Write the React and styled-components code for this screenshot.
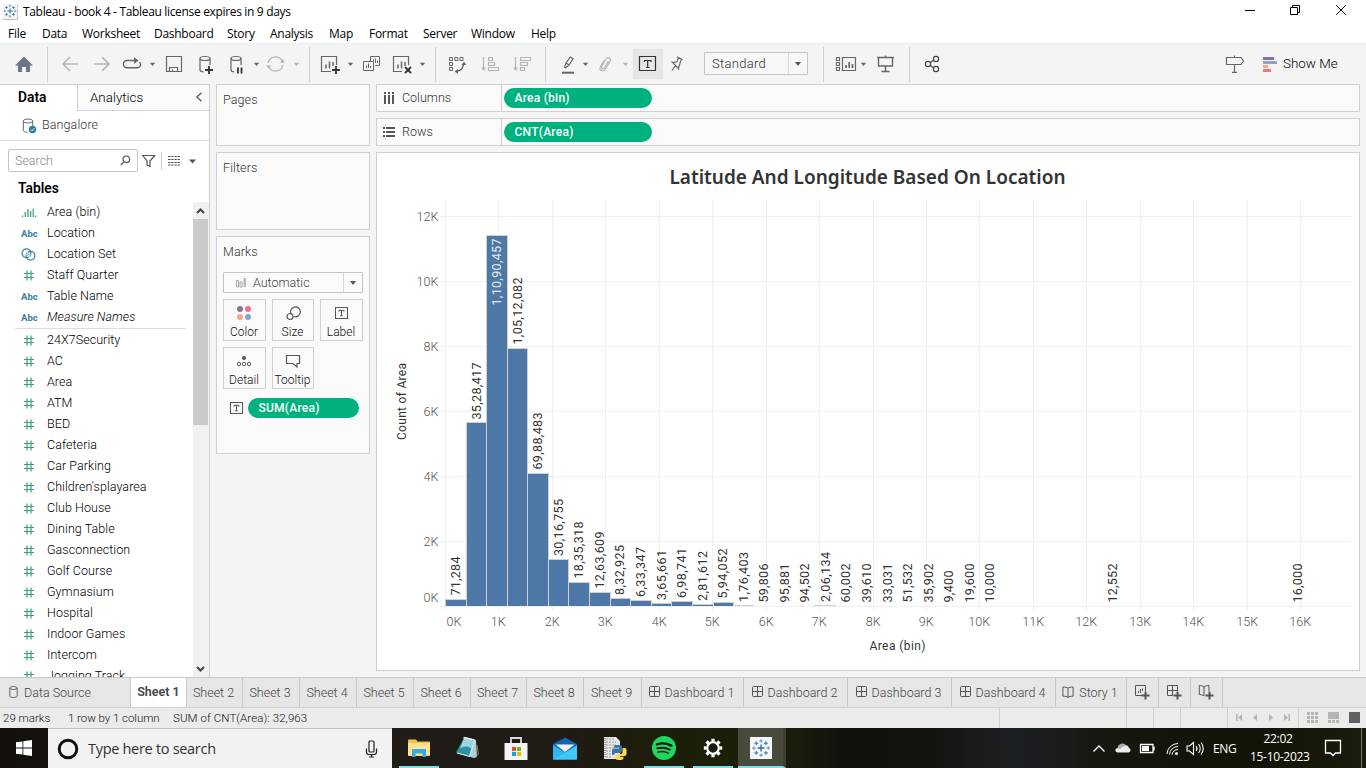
import React from "react";
import styled, { createGlobalStyle, css } from "styled-components";

const ui = '"Roboto", "Liberation Sans", sans-serif';
const sys = '"Open Sans", "Noto Sans", sans-serif';

const Global = createGlobalStyle`
  *{box-sizing:border-box}
  body{margin:0;background:#f4f4f4;font-family:${ui};overflow:hidden}
  svg{display:block;flex:none}
`;

const Window = styled.div`
  width: 1366px;
  height: 768px;
  display: flex;
  flex-direction: column;
  overflow: hidden;
  font-size: 12.5px;
  font-weight: 300;
  color: #111;
  white-space: nowrap;
`;

/* ---------- title bar and menu ---------- */
const TitleBar = styled.header`
  height: 23px;
  display: flex;
  align-items: center;
  background: #fff;
  padding-left: 3px;
  font: 12px ${sys};
  letter-spacing: -0.33px;
  color: #000;
`;
const TitleText = styled.span`
  margin-left: 5px;
  flex: 1;
`;
const MenuBar = styled.nav`
  height: 20px;
  display: flex;
  align-items: center;
  background: #fff;
  padding-left: 8px;
  font: 12px ${sys};
  letter-spacing: -0.27px;
  color: #000;
`;
const MenuItem = styled.span`
  width: ${(p) => p.$w}px;
`;
const menu = [["File", 34], ["Data", 40], ["Worksheet", 72], ["Dashboard", 73], ["Story", 43], ["Analysis", 59], ["Map", 40], ["Format", 54], ["Server", 48], ["Window", 60], ["Help", 40]];

const TableauMark = ({ size }) => (
  <svg width={size} height={size} viewBox="0 0 22 22" fill="none" stroke="#2f6f9f">
    <path d="M11 7v8M7 11h8" strokeWidth="1.6" />
    <path d="M11 0.8v4M9 2.8h4M11 17.2v4M9 19.2h4M2.8 9v4M.8 11h4M19.2 9v4M17.2 11h4" strokeWidth="1.1" stroke="#5b8db5" />
    <path d="M5.5 3.3v4.4M3.3 5.5h4.4M16.5 3.3v4.4M14.3 5.5h4.4M5.5 14.3v4.4M3.3 16.5h4.4M16.5 14.3v4.4M14.3 16.5h4.4" strokeWidth="1.4" stroke="#3f86b5" />
  </svg>
);
const AppIcon = styled.span`
  width: 15px;
  height: 16px;
  background: #f5f5f5;
  border-right: 1px solid #ccc;
  border-bottom: 1px solid #bbb;
`;

/* ---------- toolbar ---------- */
const Toolbar = styled.div`
  height: 41px;
  flex: none;
  display: flex;
  background: #f4f4f4;
  border-top: 1px solid #ededed;
`;
const Tool = styled.div`
  width: ${(p) => p.$w}px;
  height: 40px;
  ${(p) => p.$active && css`height: 30px; margin-top: 5px; background: #e6e6e6; overflow: hidden; svg { margin-top: -5px; }`}
`;
const Rule = styled.i`
  width: 1px;
  height: 35px;
  margin-top: 3px;
  background: #d0d0d0;
`;
const Spacer = styled.div`
  ${(p) => (p.$w ? `width:${p.$w}px;` : "flex:1;")}
`;
/* Each glyph is drawn in toolbar coordinates and cropped to its own slot. */
const Slot = ({ x, w, color = "#666", active, children }) => (
  <Tool $w={w} $active={active}>
    <svg width={w} height="40" viewBox={`${x} 44 ${w} 40`} fill="none" stroke={color} strokeWidth="1.2">{children}</svg>
  </Tool>
);
const Caret = ({ x, w, at, color = "#666" }) => (
  <Slot x={x} w={w}><path d={`M${at - 2.7} 62.7h5.4l-2.7 3.2z`} fill={color} stroke="none" /></Slot>
);
const Zoom = styled.div`
  width: 104px;
  height: 23px;
  margin-top: 8px;
  border: 1px solid #c4c4c4;
  border-radius: 1px;
  display: flex;
  align-items: center;
  color: #333;
  font-size: 13px;
  letter-spacing: 0.3px;
  padding-left: 7px;
  background: #f7f7f7;
`;
const DropArrow = styled.span`
  margin-left: auto;
  width: ${(p) => p.$w || 19}px;
  align-self: stretch;
  border-left: 1px solid #d8d8d8;
  display: flex;
  align-items: center;
  justify-content: center;
  &::after {
    content: "";
    border: 3.5px solid transparent;
    border-top: 4px solid #555;
    border-bottom: 0;
  }
`;
const ShowMe = styled.div`
  width: 116px;
  height: 40px;
  display: flex;
  align-items: center;
  gap: 6px;
  padding: 0 0 2px 13px;
  font-size: 13.4px;
  color: #000;
  svg { margin-top: 2px; }
`;

/* ---------- body ---------- */
const Body = styled.main`
  flex: 1;
  min-height: 0;
  display: flex;
`;
const DataPane = styled.aside`
  width: 210px;
  background: #fff;
  border-right: 1px solid #d0d0d0;
  border-top: 1px solid #d0d0d0;
  display: flex;
  flex-direction: column;
`;
const PaneTabs = styled.div`
  display: flex;
  height: 26px;
`;
const PaneTab = styled.div`
  width: ${(p) => (p.$on ? 77 : 132)}px;
  padding-left: ${(p) => (p.$on ? 18 : 12)}px;
  padding-bottom: ${(p) => (p.$on ? 2 : 1)}px;
  display: flex;
  align-items: center;
  font-size: ${(p) => (p.$on ? 13.8 : 13.4)}px;
  color: #000;
  font-weight: ${(p) => (p.$on ? 600 : 300)};
  ${(p) => !p.$on && css`background: #fafafa; border-left: 1px solid #d0d0d0; border-bottom: 1px solid #d0d0d0; svg { margin: 0 6px 0 auto; }`}
`;
const SourceRow = styled.div`
  height: 30px;
  border-bottom: 1px solid #e0e0e0;
  display: flex;
  align-items: center;
  padding: 0 0 2px 22px;
  gap: 5px;
  color: #333;
  letter-spacing: 0.1px;
  svg { margin-top: 3px; }
`;
const SearchRow = styled.div`
  display: flex;
  align-items: center;
  height: 39px;
  padding-left: 8px;
`;
const SearchBox = styled.div`
  width: 130px;
  height: 23px;
  border: 1px solid #c4c4c4;
  border-radius: 2px;
  display: flex;
  align-items: center;
  justify-content: space-between;
  padding: 0 6px;
  color: #888;
  margin-right: 4px;
`;
const TablesHead = styled.div`
  height: 22px;
  line-height: 17px;
  padding-left: 18px;
  font-size: 13.8px;
  font-weight: 600;
  color: #000;
`;
const ListWrap = styled.div`
  flex: 1;
  min-height: 0;
  display: flex;
`;
const List = styled.div`
  flex: 1;
  overflow: hidden;
`;
const Field = styled.div`
  height: 21px;
  display: flex;
  align-items: center;
  padding: 0 0 2px 20px;
  color: #000;
  letter-spacing: 0.06px;
  font-style: ${(p) => (p.$it ? "italic" : "normal")};
`;
const FieldIcon = styled.span`
  width: 27px;
  padding-left: 1px;
  color: #3a7f9f;
  font: 700 9.5px ${ui};
  position: relative;
  top: 1px;
  svg { margin-left: -1px; }
`;
const ListRule = styled.i`
  display: block;
  height: 1px;
  margin: 0 7px 1px 15px;
  background: #dcdcdc;
`;
const Scroll = styled.div`
  width: 16px;
  background: #f0f0f0;
  display: flex;
  flex-direction: column;
`;
const Thumb = styled.div`
  width: 15px;
  height: 206px;
  background: #cacaca;
  margin-bottom: auto;
`;

/* ---------- cards ---------- */
const Cards = styled.section`
  width: 154px;
  margin-left: 6px;
  display: flex;
  flex-direction: column;
  gap: 6px;
`;
const Card = styled.div`
  height: ${(p) => p.$h}px;
  border: 1px solid #d0d0d0;
  background: #fafafa;
  padding: 7px 6px;
  color: #333;
`;
const CardTitle = styled.div`
  height: 15px;
  line-height: 15px;
  letter-spacing: 0.1px;
`;
const MarkType = styled.div`
  margin-top: 13px;
  width: 140px;
  height: 21px;
  border: 1px solid #c4c4c4;
  border-radius: 1px;
  display: flex;
  align-items: center;
  gap: 6px;
  padding-left: 12px;
  color: #444;
`;
const MarkGrid = styled.div`
  margin-top: 6px;
  display: grid;
  grid-template-columns: 43px 42px 43px;
  column-gap: 6px;
  row-gap: 6px;
`;
const MarkButton = styled.div`
  height: 42px;
  border: 1px solid #d0d0d0;
  display: flex;
  flex-direction: column;
  align-items: center;
  justify-content: space-between;
  padding: 5px 1px 1px 0;
  font-size: 12px;
  line-height: 14px;
  color: #111;
`;
const PillRow = styled.div`
  margin-top: 9px;
  padding-left: 7px;
  display: flex;
  align-items: center;
  gap: 5px;
`;
const Pill = styled.div`
  width: ${(p) => p.$w}px;
  height: 20px;
  border-radius: 10px;
  background: #00b180;
  color: #fff;
  font-weight: 500;
  font-size: 12px;
  line-height: 20px;
  padding-left: 10.5px;
  letter-spacing: 0.25px;
`;

/* ---------- shelves and view ---------- */
const Work = styled.section`
  width: 984px;
  margin-left: 6px;
  display: flex;
  flex-direction: column;
  gap: 6px;
`;
const Shelf = styled.div`
  height: 28px;
  border: 1px solid #d0d0d0;
  background: #fafafa;
  display: flex;
  align-items: center;
`;
const ShelfName = styled.div`
  width: 125px;
  align-self: stretch;
  border-right: 1px solid #d0d0d0;
  margin-right: 2px;
  padding: 0 0 1px 6px;
  display: flex;
  align-items: center;
  gap: 7px;
  color: #333;
  font-size: 12.5px;
`;
const View = styled.div`
  height: 519px;
  border: 1px solid #d0d0d0;
  background: #fff;
  display: flex;
  flex-direction: column;
`;
const Heading = styled.h1`
  margin: 0;
  height: 47px;
  text-align: center;
  padding-right: 1px;
  font: 600 19px/49px "Noto Sans", ${sys};
  color: #333;
`;

const barTops = [600, 423, 236, 349, 474, 560, 583, 593, 599, 601, 604, 602, 605, 603];
const labels = [
  [0, "71,284", 595.5, 39], [1, "35,28,417", 419.5, 57], [2, "1,10,90,457", 305.5, 67], [3, "1,05,12,082", 344.5, 67],
  [4, "69,88,483", 469.5, 57], [5, "30,16,755", 556, 57], [6, "18,35,318", 578.5, 57], [7, "12,63,609", 588.5, 57],
  [8, "8,32,925", 595, 50], [9, "6,33,347", 597, 50], [10, "3,65,661", 600, 50], [11, "6,98,741", 598, 50],
  [12, "2,81,612", 601, 50], [13, "5,94,052", 598.5, 50], [14, "1,76,403", 602, 50], [15, "59,806", 602.5, 39],
  [16, "95,881", 602.5, 39], [17, "94,502", 602.5, 39], [18, "2,06,134", 602, 50], [19, "60,002", 602.5, 39],
  [20, "39,610", 602.5, 39], [21, "33,031", 602.5, 39], [22, "51,532", 602.5, 39], [23, "35,902", 602.5, 39],
  [24, "9,400", 602.5, 32], [25, "19,600", 602.5, 39], [26, "10,000", 602.5, 39], [32, "12,552", 602.5, 39], [41, "16,000", 602.5, 39],
];
const edge = (k) => Math.round(445 + 20.58 * k);
const tick = (k) => Math.floor(445.5 + 53.44 * k) + 0.5;

const Chart = () => (
  <svg width="982" height="470" viewBox="377 200 982 470" fontFamily="Roboto, sans-serif" fontSize="12.6" fontWeight="400">
    <g stroke="#f0f0f0">
      {Array.from({ length: 17 }, (_, k) => <path key={k} d={`M${tick(k)} 200V610`} />)}
      {[216, 281, 346, 411, 476, 541, 606].map((y) => <path key={y} d={`M440 ${y + 0.5}H1351`} />)}
    </g>
    {barTops.map((t, k) => (
      <g key={k} shapeRendering="crispEdges">
        <rect x={edge(k)} y={t - 1} width={edge(k + 1) - edge(k) + 1} height={607 - t} fill="#d0d0d0" />
        <rect x={edge(k) + 1} y={t} width={edge(k + 1) - edge(k) - 1} height={606 - t} fill="#4e79a7" />
      </g>
    ))}
    <path d="M733 605.5h21M814 605.5h22" stroke="#d0d0d0" />
    <g fill="#333">
      {labels.map(([k, s, y, len]) => (
        <text key={k} transform={`translate(${445.2 + 20.54 * (k + 0.5) + 4.7} ${y}) rotate(-90)`} textLength={len} fill={k === 2 ? "#e4ebf3" : undefined}>{s}</text>
      ))}
    </g>
    <g fill="#555" fontWeight="300">
      {["12K", "10K", "8K", "6K", "4K", "2K"].map((s, i) => <text key={s} x="438.5" y={221 + 65 * i} textAnchor="end">{s}</text>)}
      <text x="438.5" y="602.3" textAnchor="end">0K</text>
      {Array.from({ length: 17 }, (_, k) => <text key={k} x={k ? tick(k) - 0.3 : 454} y="626.3" textAnchor="middle">{k}K</text>)}
    </g>
    <g fill="#333" fontSize="12">
      <text x="869.5" y="650" textLength="56">Area (bin)</text>
      <text transform="translate(406 440) rotate(-90)" textLength="77">Count of Area</text>
    </g>
  </svg>
);

/* ---------- sheet tabs ---------- */
const SheetTabs = styled.div`
  height: 31px;
  flex: none;
  border-top: 1px solid #c8c8c8;
  border-bottom: 1px solid #d0d0d0;
  background: #e6e6e6;
  display: flex;
`;
const SheetTab = styled.div`
  width: ${(p) => p.$w}px;
  border-right: 1px solid #c8c8c8;
  display: flex;
  align-items: center;
  justify-content: ${(p) => (p.$left ? "flex-start" : "center")};
  padding: 0 ${(p) => (p.$left || p.$on ? 0 : 2)}px ${(p) => (p.$on ? 2 : 0)}px ${(p) => (p.$left ? 9 : 0)}px;
  gap: ${(p) => (p.$left ? 6 : 5)}px;
  color: #444;
  background: ${(p) => (p.$on ? "#fff" : "transparent")};
  font-weight: ${(p) => (p.$on ? 600 : 300)};
  svg { margin-top: -2px; }
`;
const StatusBar = styled.div`
  height: 20px;
  flex: none;
  background: #ebebeb;
  display: flex;
  font-size: 11.5px;
  color: #111;
  line-height: 20px;
`;
const StatusText = styled.span`
  width: ${(p) => p.$w}px;
  letter-spacing: ${(p) => p.$ls || 0}px;
`;
const StatusCell = styled.div`
  width: ${(p) => p.$w}px;
  border-left: 1px solid #d0d0d0;
`;

/* ---------- taskbar ---------- */
const Taskbar = styled.footer`
  height: 40px;
  flex: none;
  display: flex;
  background: linear-gradient(90deg, #14110c 0, #201c17 400px, #1f1b15 560px, #1c1f08 680px, #1b1d0b 790px, #10100d 850px, #14130f 930px, #1d2023 1010px, #14170c 1120px, #121407 1260px, #1b1c0c 1366px);
  color: #fff;
  font-family: ${sys};
  font-weight: 400;
`;
const Task = styled.div`
  width: ${(p) => p.$w}px;
  display: flex;
  align-items: center;
  justify-content: center;
  background: ${(p) => (p.$on ? "#484a3b" : "transparent")};
  border-bottom: ${(p) => (p.$run ? "2px solid #7fdfe5" : "0")};
  border-right: ${(p) => (p.$on ? "3px solid #3e4032" : "0")};
  padding-top: ${(p) => (p.$run ? 2 : 0)}px;
  margin: 0 ${(p) => p.$m || 0}px;
`;
const TaskSearch = styled.div`
  width: 344px;
  background: #f2f2f2;
  border-top: 1px solid #c0c0c0;
  display: flex;
  align-items: center;
  padding: 0 14px 0 9px;
  color: #333;
  font-size: 14.5px;
  letter-spacing: -0.3px;
`;
const SearchHint = styled.span`
  margin: 0 auto 0 9px;
`;
const Tray = styled.div`
  display: flex;
  align-items: center;
  width: 276px;
  margin-left: auto;
  font-size: 12px;
  letter-spacing: -0.3px;
`;
const Lang = styled.span`
  width: 36px;
  padding-left: 1px;
`;
const Clock = styled.div`
  width: 58px;
  padding-left: 2px;
  text-align: center;
  line-height: 18px;
`;

const Hash = () => (
  <svg width="18" height="13" viewBox="0 0 18 13" fill="none" stroke="#3a9f7e" strokeWidth="1.2"><path d="M4 4.5h10M4 8.5h10M7 1.5v10M11 1.5v10" /></svg>
);
const BinIcon = () => (
  <svg width="18" height="13" viewBox="0 0 18 13" fill="#3a9f7e"><path d="M2 9.5h1.3V11H2zM4.6 6h1.3v5H4.6zM7.3 3h1.3v8H7.3zM10 5h1.3v6H10zM12.6 2.5h1.2V11h-1.2zM15 9.5h1.3V11H15z" /></svg>
);
const SetIcon = () => (
  <svg width="18" height="13" viewBox="0 0 18 13" fill="none" stroke="#3a7f9f" strokeWidth="1.2"><circle cx="6.5" cy="5.2" r="4.4" /><circle cx="10.5" cy="7.8" r="4.4" /><path d="M7 3.6l3.8 2.9-.8 2.8-4-2z" fill="#b8d3df" stroke="none" /></svg>
);
const icons = { "#": <Hash />, bin: <BinIcon />, set: <SetIcon />, abc: "Abc" };
const dims = [["bin", "Area (bin)"], ["abc", "Location"], ["set", "Location Set"], ["#", "Staff Quarter"], ["abc", "Table Name"], ["abc", "Measure Names"]];
const measures = ["24X7Security", "AC", "Area", "ATM", "BED", "Cafeteria", "Car Parking", "Children'splayarea", "Club House", "Dining Table", "Gasconnection", "Golf Course", "Gymnasium", "Hospital", "Indoor Games", "Intercom", "Jogging Track"];

const TextBox = ({ w = 13, h = 12 }) => (
  <svg width={w} height={h} viewBox="0 0 13 12" fill="none" stroke="#555"><rect x=".5" y=".5" width="12" height="11" /><path d="M4 4.6V3.3h5v1.3M6.5 3.3v5.4M5.2 8.8h2.6" /></svg>
);
const GridIcon = () => (
  <svg width="11" height="11" viewBox="0 0 11 11" fill="none" stroke="#555"><rect x=".5" y=".5" width="10" height="10" rx="1" /><path d="M5.5 0v11M0 5.5h11" /></svg>
);
const BookIcon = () => (
  <svg width="12" height="12" viewBox="0 0 12 12" fill="none" stroke="#555"><path d="M6 11.5V2.3M6 2.3C5 1.2 3 1 .9 1v9.2c2.1 0 4 .2 5.1 1.3 1-1.1 3-1.3 5.1-1.3V1C9 1 7 1.2 6 2.3z" /></svg>
);
const Plus = () => <path d="M7.5 11.5h8M11.5 7.5v8" strokeWidth="2" />;

export default function App() {
  return (
    <Window>
      <Global />
      <TitleBar>
        <AppIcon><TableauMark size={14} /></AppIcon>
        <TitleText>Tableau - book 4 - Tableau license expires in 9 days</TitleText>
        <svg width="130" height="23" viewBox="1236 0 130 23" fill="none" stroke="#000" strokeWidth="1">
          <path d="M1245 10.5h10M1290.5 7.5h7v7h-7zM1292.5 7.5v-2h7v7h-2M1336.3 5.3l9.4 9.4M1345.7 5.3l-9.4 9.4" />
        </svg>
      </TitleBar>
      <MenuBar>{menu.map(([t, w]) => <MenuItem key={t} $w={w}>{t}</MenuItem>)}</MenuBar>

      <Toolbar>
        <Slot x={0} w={47}><path d="M15 65.5l9-9 9 9h-3V72h-4v-5h-4v5h-4v-6.5z" fill="#6b788a" stroke="none" /></Slot>
        <Rule />
        <Slot x={48} w={37} color="#b5b5b5"><path d="M78 64H63M70 57l-7 7 7 7" strokeWidth="1.5" /></Slot>
        <Slot x={85} w={33} color="#b5b5b5"><path d="M94 64h15M102 57l7 7-7 7" strokeWidth="1.5" /></Slot>
        <Slot x={118} w={30}><path d="M136 60.5h-9a3.6 3.6 0 0 0 0 7.2h10c3.600 0 4.600-3.300 2.600-5.600" strokeWidth="1.4" /><path d="M134 57.200l4.500 3.300-4.500 3.300z" fill="#666" stroke="none" /></Slot>
        <Caret x={148} w={10} at={152.5} />
        <Slot x={158} w={32}><path d="M166.5 56.5h15v15h-15zM169.5 71.5v-4h8v4M172.5 69.5v2" /></Slot>
        <Slot x={190} w={32}><ellipse cx="205" cy="58.5" rx="5" ry="2" /><path d="M200 58.5V70c0 1 1.5 1.7 3.5 1.9M210 58.5V65" /><path d="M205 70h8M209 66v8" stroke="#333" strokeWidth="1.8" /></Slot>
        <Slot x={222} w={28}><ellipse cx="236" cy="58.5" rx="5" ry="2" /><path d="M231 58.5V70c0 1 1 1.7 3 1.9M241 58.5V65" /><path d="M238 67.5v6M241.5 67.5v6" stroke="#333" strokeWidth="1.8" /></Slot>
        <Caret x={250} w={14} at={256.5} />
        <Slot x={264} w={25} color="#b5b5b5"><path d="M268 63a7.5 7 0 0 1 14.3-1.8M283 65a7.5 7 0 0 1-14.3 1.8" /><path d="M280 62.8l5-.3-2.2-3.3zM271.3 65.2l-4.9.3 2.2 3.3z" fill="#b5b5b5" stroke="none" /></Slot>
        <Caret x={289} w={20} at={296.5} color="#b5b5b5" />
        <Rule />
        <Slot x={310} w={34}><path d="M331 71.5h-9.500v-15h15V65" /><path d="M326 68.500v-4M329.500 68.500v-7M333 66v-4" strokeWidth="1.500" /><path d="M332 70h8M336 66v8" stroke="#333" strokeWidth="1.8" /></Slot>
        <Caret x={344} w={14} at={350.5} />
        <Slot x={358} w={30}><path d="M370.500 61v-4.500h9v9H375M363.500 61.500h10v9h-10zM366.500 68v-2.500M368.500 68v-4.500M370.500 68v-2M373.500 59.500V61M375.500 63v-4.500M377.500 63v-2.500" strokeWidth="1" /></Slot>
        <Slot x={388} w={29}><path d="M402 71.5h-8.500v-15h15V65" /><path d="M398 68.500v-4M401.500 68.500v-7M405 66v-4" strokeWidth="1.500" /><path d="M405 67l6 6M411 67l-6 6" stroke="#333" strokeWidth="1.8" /></Slot>
        <Caret x={417} w={18} at={422.5} />
        <Rule />
        <Slot x={436} w={38}><path d="M449.500 57.500h3v3h-3zM454.800 57.500h3v3h-3zM460 57.500h3v3h-3zM449.500 62.500h3v3h-3zM449.500 67.500h3v3h-3z" strokeWidth="1" /><path d="M463.500 64c-.3 4-3 7-7.500 7.300" strokeWidth="1.500" /><path d="M461.500 65l2.500-3.500 2.300 3.500zM458 69l-3.500 2.500 3.500 2.300z" fill="#666" stroke="none" /></Slot>
        <Slot x={474} w={32} color="#b5b5b5"><path d="M483.500 57v13M488.500 57.500h4v3h-4zM488.500 62.500h6v3h-6zM488.500 67.500h10v3h-10z" /><path d="M481.200 67.500h4.800l-2.400 3.500z" fill="#b5b5b5" stroke="none" /></Slot>
        <Slot x={506} w={39} color="#b5b5b5"><path d="M515.500 57v13M520.500 57.500h10v3h-10zM520.500 62.500h7v3h-7zM520.500 67.500h4v3h-4z" /><path d="M513.200 67.500h4.800l-2.400 3.500z" fill="#b5b5b5" stroke="none" /></Slot>
        <Rule />
        <Slot x={546} w={32}><path d="M564.500 67l1.500-4 4.300-6 2.700 1.700-4 6.300-3.400 2.800zM566 63l3 2" /><path d="M562 72.700h12" strokeWidth="2" /></Slot>
        <Caret x={578} w={14} at={585.5} />
        <Slot x={592} w={26} color="#b5b5b5"><path d="M608.500 61l-4 7c-1.200 1.800-3.800.5-2.800-1.500l4.200-7.500c1.700-2.700 5.600-.8 4.300 2l-5 8.500c-2 3-6.500.8-4.900-2.500l3.700-6.500" /></Slot>
        <Caret x={618} w={15} at={625.5} color="#b5b5b5" />
        <Slot x={633} w={30} active color="#333"><path d="M639.500 56.500h16v14h-16z" strokeWidth="1.200" /><path d="M644.500 62v-1.500h6.500V62M647.700 60.500v7M646 67.500h3.500" /></Slot>
        <Slot x={663} w={41}><path d="M677 56.800l5.600 2.900M678.500 57.600l-1.500 4.200-4.200.8 5.600 5.800 1.300-4.300 1.600-4.700M675.500 65.500l-3.500 5M671.500 61.500l1.300 1.100M678.400 68.400l.6 1.500" /></Slot>
        <Zoom>Standard<DropArrow /></Zoom>
        <Spacer $w={15} />
        <Rule />
        <Slot x={824} w={34}><path d="M836.500 57.500h3v3h-3zM836.500 62.500h3v3h-3zM836.500 67.500h3v3h-3zM842.500 57.500h13v13h-13z" /><path d="M846 68v-3M849.200 68v-6M852.500 68v-4" strokeWidth="1.700" /></Slot>
        <Caret x={858} w={14} at={863.5} />
        <Slot x={872} w={37}><path d="M877 57.500h17M878.500 57.500v8.500h14v-8.500M885.500 55.500v2M885.500 66v5M881.500 71.500h8" strokeWidth="1.400" /></Slot>
        <Rule />
        <Slot x={910} w={40} color="#444"><circle cx="928" cy="64" r="2.600" /><circle cx="936" cy="59" r="2.600" /><circle cx="936" cy="69" r="2.600" /><path d="M930.300 62.500l3.500-2.200M930.300 65.500l3.500 2.200" /></Slot>
        <Spacer />
        <Slot x={1220} w={30}><path d="M1226.500 57.500h14.500l2.500 3.500-2.500 3.500h-14.500zM1234.500 55.500v2M1234.500 64.500V72M1232 72.300h5" /></Slot>
        <ShowMe>
          <svg width="14" height="16" viewBox="0 0 14 16"><path d="M0 1h11v3H0z" fill="#8a729c" /><path d="M0 5h14v3H0z" fill="#85a5cf" /><path d="M0 9h5v3H0z" fill="#f5a97f" /><path d="M0 13h8v3H0z" fill="#f8717e" /></svg>
          Show Me
        </ShowMe>
      </Toolbar>

      <Body>
        <DataPane>
          <PaneTabs>
            <PaneTab $on>Data</PaneTab>
            <PaneTab>Analytics<svg width="8" height="10" viewBox="0 0 8 10" fill="none" stroke="#555" strokeWidth="1.2"><path d="M6.500 .8L1.800 5l4.700 4.200" /></svg></PaneTab>
          </PaneTabs>
          <SourceRow>
            <svg width="15" height="16" viewBox="0 0 15 16" fill="none" stroke="#666"><ellipse cx="6" cy="3" rx="4.700" ry="2" /><path d="M1.300 3v9.500c0 1 2 1.700 4 1.800M10.700 3v5" /><circle cx="10.500" cy="11.500" r="3.700" fill="#2f7d9e" stroke="none" /><path d="M8.800 11.500l1.300 1.300 2.200-2.500" stroke="#fff" /></svg>
            Bangalore
          </SourceRow>
          <SearchRow>
            <SearchBox>Search<svg width="11" height="11" viewBox="0 0 11 11" fill="none" stroke="#555" strokeWidth="1.200"><circle cx="6.300" cy="4.300" r="3.300" /><path d="M4 6.700L.8 10" /></svg></SearchBox>
            <svg width="62" height="20" viewBox="142 150 62 20" fill="none" stroke="#555" strokeWidth="1.200">
              <path d="M142.700 154.500h12l-4.700 5.500v5.500l-3-1.500v-4z" /><path d="M161.500 151v18" stroke="#d0d0d0" />
              <path d="M168 155.500h12M168 158.500h12M168 161.500h12M168 164h12" strokeDasharray="2.400 .8" /><path d="M189 158.500h7l-3.500 4z" fill="#555" stroke="none" />
            </svg>
          </SearchRow>
          <TablesHead>Tables</TablesHead>
          <ListWrap>
            <List>
              {dims.map(([i, t]) => <Field key={t} $it={t === "Measure Names"}><FieldIcon>{icons[i]}</FieldIcon>{t}</Field>)}
              <ListRule />
              {measures.map((t) => <Field key={t}><FieldIcon><Hash /></FieldIcon>{t}</Field>)}
            </List>
            <Scroll>
              <svg width="16" height="17" viewBox="0 0 16 17" fill="none" stroke="#444" strokeWidth="2"><path d="M4 11l3.500-3.500L11 11" /></svg>
              <Thumb />
              <svg width="16" height="17" viewBox="0 0 16 17" fill="none" stroke="#444" strokeWidth="2"><path d="M4 7l3.500 3.500L11 7" /></svg>
            </Scroll>
          </ListWrap>
        </DataPane>

        <Cards>
          <Card $h={62}><CardTitle>Pages</CardTitle></Card>
          <Card $h={78}><CardTitle>Filters</CardTitle></Card>
          <Card $h={218}>
            <CardTitle>Marks</CardTitle>
            <MarkType>
              <svg width="11" height="11" viewBox="0 0 11 11"><path d="M.5 3.500h2V10h-2zM4 5h2v5H4z" fill="none" stroke="#aaa" /><path d="M7.500 1H10v9H7.500z" fill="#bbb" /></svg>
              Automatic<DropArrow />
            </MarkType>
            <MarkGrid>
              <MarkButton><svg width="16" height="16" viewBox="0 0 16 16"><circle cx="4" cy="4" r="3" fill="#8a729c" /><circle cx="12" cy="4" r="3" fill="#f8717e" /><circle cx="4" cy="12" r="3" fill="#f5a97f" /><circle cx="12" cy="12" r="3" fill="#85a5cf" /></svg>Color</MarkButton>
              <MarkButton><svg width="16" height="16" viewBox="0 0 16 16" fill="none" stroke="#555" strokeWidth="1.200"><path d="M6.300 9.500a4.900 4.900 0 1 1 2.500 2" /><circle cx="5" cy="11.500" r="3" /></svg>Size</MarkButton>
              <MarkButton><svg width="16" height="16" viewBox="-2 -2 16 16" fill="none" stroke="#555"><rect x=".5" y=".5" width="12" height="11" /><path d="M4 4.600V3.300h5v1.300M6.500 3.300v5.400M5.200 8.800h2.600" /></svg>Label</MarkButton>
              <MarkButton><svg width="16" height="16" viewBox="0 0 16 16" fill="none" stroke="#555"><circle cx="8" cy="5" r="2" fill="#555" stroke="none" /><circle cx="3" cy="11" r="1.700" /><circle cx="8" cy="11" r="1.700" /><circle cx="13" cy="11" r="1.700" /></svg>Detail</MarkButton>
              <MarkButton><svg width="16" height="16" viewBox="0 0 16 16" fill="none" stroke="#555" strokeWidth="1.200"><path d="M1.500 2.500h13v8h-2.500v3.500l-4-3.500H1.500z" /></svg>Tooltip</MarkButton>
            </MarkGrid>
            <PillRow><TextBox /><Pill $w={111}>SUM(Area)</Pill></PillRow>
          </Card>
        </Cards>

        <Work>
          <Shelf>
            <ShelfName><svg width="12" height="12" viewBox="0 0 12 12" fill="#555"><path d="M1 0h2v2H1zM5 0h2v2H5zM9 0h2v2H9zM1 3h2v9H1zM5 3h2v9H5zM9 3h2v9H9z" /></svg>Columns</ShelfName>
            <Pill $w={148}>Area (bin)</Pill>
          </Shelf>
          <Shelf>
            <ShelfName><svg width="12" height="12" viewBox="0 0 12 12" fill="#555"><path d="M0 1h2v2H0zM0 5h2v2H0zM0 9h2v2H0zM3 1h9v2H3zM3 5h9v2H3zM3 9h9v2H3z" /></svg>Rows</ShelfName>
            <Pill $w={148}>CNT(Area)</Pill>
          </Shelf>
          <View>
            <Heading>Latitude And Longitude Based On Location</Heading>
            <Chart />
          </View>
        </Work>
      </Body>

      <SheetTabs>
        <SheetTab $w={131} $left>
          <svg width="9" height="12" viewBox="0 0 9 12" fill="none" stroke="#666"><ellipse cx="4.500" cy="2" rx="3.700" ry="1.500" /><path d="M.8 2v8c0 2 7.400 2 7.400 0V2" /></svg>
          Data Source
        </SheetTab>
        <SheetTab $w={56} $on>Sheet 1</SheetTab>
        {[57, 57, 57, 57, 57, 56, 57, 57].map((w, i) => <SheetTab key={i} $w={w - (i === 0 ? 1 : 0) + (i === 7 ? 1 : 0)}>Sheet {i + 2}</SheetTab>)}
        {[102, 104, 104, 104].map((w, i) => <SheetTab key={i} $w={w}><GridIcon />Dashboard {i + 1}</SheetTab>)}
        <SheetTab $w={71}><BookIcon />Story 1</SheetTab>
        <SheetTab $w={32}><svg width="16" height="16" viewBox="0 0 16 16" fill="none" stroke="#555"><path d="M8 11.500H1.500v-10h10V7M4.500 9V7M6.500 9V5M8.500 7V4.500" /><Plus /></svg></SheetTab>
        <SheetTab $w={32}><svg width="16" height="16" viewBox="0 0 16 16" fill="none" stroke="#555"><path d="M7 11.500H1.500v-10h10V7M6.500 1.500v10M1.500 6.500h10" /><Plus /></svg></SheetTab>
        <SheetTab $w={32}><svg width="16" height="16" viewBox="0 0 16 16" fill="none" stroke="#555"><path d="M6 12V3C5 2 3 1.500 1.300 1.500v9C3 10.500 5 11 6 12zM6 3c1-1 3-1.500 5-1.500V7" /><Plus /></svg></SheetTab>
      </SheetTabs>

      <StatusBar>
        <Spacer $w={3} />
        <StatusText $w={65}>29 marks</StatusText>
        <StatusText $w={105} $ls={-0.05}>1 row by 1 column</StatusText>
        <StatusText $w={826} $ls={0.08}>SUM of CNT(Area): 32,963</StatusText>
        <StatusCell $w={127} /><StatusCell $w={27} /><StatusCell $w={27} /><StatusCell $w={47} />
        <StatusCell $w={71}><svg width="70" height="20" viewBox="1228 708 70 20" fill="#b5b5b5"><path d="M1236 714h1.500v7h-1.500zM1242 714v7l-4-3.500zM1257 714v7l-4-3.500zM1269 714v7l4-3.500zM1284 714v7l4-3.500zM1288.500 714h1.500v7h-1.500z" /></svg></StatusCell>
        <StatusCell $w={68}><svg width="67" height="20" viewBox="1299 708 67 20" fill="#b5b5b5"><path d="M1307 712h3v3h-3zM1311 712h3v3h-3zM1315 712h3v3h-3zM1307 716h3v3h-3zM1311 716h3v3h-3zM1315 716h3v3h-3zM1307 720h3v3h-3zM1311 720h3v3h-3zM1315 720h3v3h-3zM1328 712h11v7h-11zM1328 720h3v3h-3zM1332 720h3v3h-3zM1336 720h3v3h-3z" /><path d="M1349 712h11v11h-11z" fill="#606060" /></svg></StatusCell>
      </StatusBar>

      <Taskbar>
        <Task $w={48}><svg width="16" height="16" viewBox="0 0 16 16" fill="#fff"><path d="M0 2.300l6.500-.9v6.200H0zM7.300 1.300L16 0v7.600H7.300zM0 8.400h6.500v6.200L0 13.700zM7.300 8.400H16V16l-8.700-1.300z" /></svg></Task>
        <TaskSearch>
          <svg width="22" height="22" viewBox="0 0 22 22" fill="none" stroke="#111" strokeWidth="3"><circle cx="11" cy="11" r="8.800" /></svg>
          <SearchHint>Type here to search</SearchHint>
          <svg width="13" height="18" viewBox="0 0 13 18" fill="none" stroke="#222" strokeWidth="1.200"><rect x="4" y="1" width="5" height="11" rx="1" /><path d="M1.500 8.500v3.500c0 1.600 1 2.500 2.500 2.500h5c1.500 0 2.500-.9 2.500-2.500V8.500M6.500 14.500V17M4 17h5" /></svg>
        </TaskSearch>
        <Spacer $w={7} />
        <Task $w={40} $run><svg width="22" height="19" viewBox="0 0 22 19"><path d="M0 1.500Q0 .5 1 .5h7l1.500 2H21q1 0 1 1V16q0 1-1 1H1q-1 0-1-1z" fill="#f5c33b" /><path d="M1 4h21v12.500H0V5z" fill="#ffe394" /><path d="M4 11q0-1 1-1h12q1 0 1 1v7h-3.500v-3.500h-7V18H4z" fill="#35a9e0" /></svg></Task>
        <Task $w={40} $m={7.500}>
          <svg width="24" height="24" viewBox="0 0 24 24"><path d="M10 1l11 3 1 17-3 1-17-5z" fill="#a9d3dc" /><path d="M9 2l10 2.500-5 15.500-13-3.500z" fill="#2b91a7" /><path d="M9 2l10 2.500-2.500 8c-4-3-8-2.500-11.500 0z" fill="#9ad6df" /><path d="M2 17l12.500 3.500L19.500 5" fill="none" stroke="#dff0f3" /><path d="M22 9l1.300 9-3 4" stroke="#a87f57" fill="none" /><path d="M8.500 1.500l11 2.500" stroke="#f0f0f0" strokeWidth="1.500" /></svg>
        </Task>
        <Task $w={40} $m={1.500}><svg width="24" height="25" viewBox="0 0 24 25"><path d="M7 8V2h10v6" fill="none" stroke="#ddd" strokeWidth="1.800" /><path d="M.5 7h23v17H.5z" fill="#f4f4f4" /><path d="M8 11h4v4H8z" fill="#e8501f" /><path d="M13 11h4v4h-4z" fill="#75b51b" /><path d="M8 16h4v4H8z" fill="#0aa5e8" /><path d="M13 16h4v4h-4z" fill="#f5b80a" /></svg></Task>
        <Task $w={40} $m={7.500}><svg width="24" height="23" viewBox="0 0 24 23"><path d="M0 7l12-6.500L24 7v15.500H0z" fill="#1464ae" /><path d="M0 8l12 7.500L24 8v14.500H0z" fill="#2eb6f0" /><path d="M0 22.500L24 9v13.500z" fill="#48cdfa" opacity=".7" /><path d="M2.500 7.500h19L12 15z" fill="#f3f7fa" /></svg></Task>
        <Task $w={40} $m={2.500}>
          <svg width="24" height="25" viewBox="0 0 24 25"><path d="M1 1h12l4 4v18H1z" fill="#e6e6e6" /><path d="M3 3h8M3 6h10M3 9h10M3 12h8M3 15h6M3 18h6M3 21h6" stroke="#999" strokeDasharray="2 1" /><path d="M2 2v20" stroke="#555" strokeDasharray="1 1" /><path d="M12 9h5q2 0 2 2v4q0 2-2 2h-4q-2 0-2 2H9v-5q0-1.500 2-1.500h5v-.8h-5V11q0-2 1-2z" fill="#3874a8" /><path d="M19.500 12H22q1.500 0 1.500 2v4q0 2-2 2h-5v.8h4V22q0 2-2.500 2h-3q-2.500 0-2.500-2v-2q0-2 2-2h3.500q1.500 0 1.500-2z" fill="#ffd747" /></svg>
        </Task>
        <Spacer $w={7} />
        <Task $w={40} $run><svg width="24" height="24" viewBox="0 0 24 24" fill="none" stroke="#10180c" strokeLinecap="round"><circle cx="12" cy="12" r="12" fill="#1ed760" stroke="none" /><path d="M5 8.300c5-1.500 10-1 14.300 1.300" strokeWidth="2.400" /><path d="M5.500 12.300c4.500-1.200 8.500-.8 12.200 1.300" strokeWidth="2" /><path d="M6 16c3.800-.9 7-.6 10.200 1.100" strokeWidth="1.600" /></svg></Task>
        <Spacer $w={9} />
        <Task $w={40} $run><svg width="20" height="20" viewBox="-10 -10 20 20" fill="none" stroke="#fff"><circle r="5.800" strokeWidth="2.200" />{[0, 45, 90, 135, 180, 225, 270, 315].map((a) => <path key={a} d="M0-6.500v-2.700" strokeWidth="3.300" transform={`rotate(${a})`} />)}</svg></Task>
        <Spacer $w={5} />
        <Task $w={48} $run $on><svg width="22" height="22" viewBox="0 0 22 22"><path d="M0 0h22v22H0z" fill="#f4f6f8" /><g transform="translate(1.500 1.500) scale(.87)"><TableauMark size={22} /></g></svg></Task>
        <Tray>
          <svg width="122" height="40" viewBox="1090 728 122 40" fill="none" stroke="#fff" strokeWidth="1.300">
            <path d="M1093.500 751.500l5.500-5.500 5.500 5.500" />
            <path d="M1118 752.500c-3.500 0-3.500-4.500 0-4.500 .5-4 5-4.500 6.500-2.500 3-.8 4.300 1 4.300 2.500 2.500.3 2.300 4.500-.5 4.500z" fill="#eee" stroke="none" />
            <path d="M1117.500 748c.5-5 7-6 9-2-3-.5-5 1-6.500 3z" fill="#aaa" stroke="none" />
            <path d="M1140.500 744.500h12.500v8h-12.500zM1154 746.500v4" /><path d="M1142 746h7v5h-7z" fill="#fff" stroke="none" />
            <path d="M1167 754a11 11 0 0 1 11-10.500M1169.500 754.500a8.500 8.500 0 0 1 8.500-8M1172 754.700a6 6 0 0 1 6-5.200" strokeWidth="1" /><circle cx="1176.500" cy="753.500" r="1.500" fill="#fff" stroke="none" />
            <path d="M1187 746h2.500l4-3.500v12l-4-3.500h-2.500zM1196 746c1.200 1.500 1.200 3.500 0 5M1198.500 744c2.300 2.500 2.300 6.500 0 9M1201 742.500c3 3.500 3 8.500 0 12" strokeWidth="1.100" />
          </svg>
          <Lang>ENG</Lang>
          <Clock>22:02<br />15-10-2023</Clock>
          <svg width="60" height="40" viewBox="1306 728 60 40" fill="none" stroke="#fff" strokeWidth="1.300"><path d="M1325.500 740.500h15v12.500h-5l-2.500 2.500-2.500-2.500h-5z" /><path d="M1361.500 728v40" stroke="#77776a" strokeWidth="1" /></svg>
        </Tray>
      </Taskbar>
    </Window>
  );
}
